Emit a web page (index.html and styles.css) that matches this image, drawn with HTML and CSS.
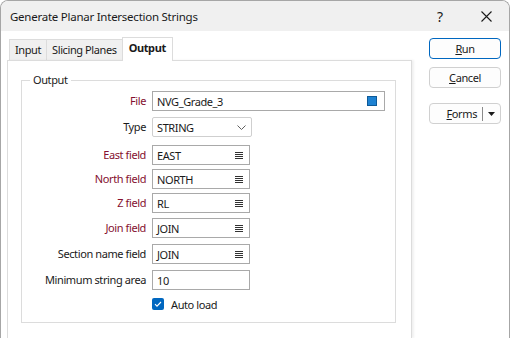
FILE: index.html
```html
<!DOCTYPE html>
<html>
<head>
  <title>Generate Planar Intersection Strings</title>
  <link rel="stylesheet" href="styles.css">
</head>
<body>
  <div class="dialog">
    <div class="titlebar">
      <span class="title">Generate Planar Intersection Strings</span>
      <span class="tb-btn help">?</span>
      <span class="tb-btn close">
        <svg width="11" height="11" viewBox="0 0 11 11"><path d="M0.5 0.5 L10.5 10.5 M10.5 0.5 L0.5 10.5" stroke="#1a1a1a" stroke-width="1.1"/></svg>
      </span>
    </div>

    <div class="body">
      <div class="main">
        <div class="tabs">
          <div class="tab">Input</div>
          <div class="tab">Slicing Planes</div>
          <div class="tab active">Output</div>
        </div>

        <div class="panel">
          <fieldset class="group">
            <legend>Output</legend>
            <div class="form">
              <label class="required">File</label>
              <div class="field wide">
                <span class="value">NVG_Grade_3</span>
                <span class="file-icon"></span>
              </div>

              <label>Type</label>
              <div class="field select">
                <span class="value">STRING</span>
                <svg class="chevron" width="9" height="5" viewBox="0 0 9 5"><path d="M0.5 0.5 L4.5 4.5 L8.5 0.5" fill="none" stroke="#606060" stroke-width="1"/></svg>
              </div>

              <label class="required">East field</label>
              <div class="field">
                <span class="value">EAST</span>
                <svg class="list-icon" width="8" height="7" viewBox="0 0 8 7"><path d="M0 0.5 H8 M0 2.5 H8 M0 4.5 H8 M0 6.5 H8" stroke="#333" stroke-width="1"/></svg>
              </div>

              <label class="required">North field</label>
              <div class="field">
                <span class="value">NORTH</span>
                <svg class="list-icon" width="8" height="7" viewBox="0 0 8 7"><path d="M0 0.5 H8 M0 2.5 H8 M0 4.5 H8 M0 6.5 H8" stroke="#333" stroke-width="1"/></svg>
              </div>

              <label class="required">Z field</label>
              <div class="field">
                <span class="value">RL</span>
                <svg class="list-icon" width="8" height="7" viewBox="0 0 8 7"><path d="M0 0.5 H8 M0 2.5 H8 M0 4.5 H8 M0 6.5 H8" stroke="#333" stroke-width="1"/></svg>
              </div>

              <label class="required">Join field</label>
              <div class="field">
                <span class="value">JOIN</span>
                <svg class="list-icon" width="8" height="7" viewBox="0 0 8 7"><path d="M0 0.5 H8 M0 2.5 H8 M0 4.5 H8 M0 6.5 H8" stroke="#333" stroke-width="1"/></svg>
              </div>

              <label>Section name field</label>
              <div class="field">
                <span class="value">JOIN</span>
                <svg class="list-icon" width="8" height="7" viewBox="0 0 8 7"><path d="M0 0.5 H8 M0 2.5 H8 M0 4.5 H8 M0 6.5 H8" stroke="#333" stroke-width="1"/></svg>
              </div>

              <label>Minimum string area</label>
              <div class="field">
                <span class="value">10</span>
              </div>

              <span></span>
              <div class="check-row">
                <span class="checkbox">
                  <svg width="12" height="12" viewBox="0 0 12 12"><path d="M3 6.2 L5 8.2 L9 4" fill="none" stroke="#fff" stroke-width="1.1"/></svg>
                </span>
                <span>Auto load</span>
              </div>
            </div>
          </fieldset>
        </div>
      </div>

      <div class="side">
        <button class="btn default"><u>R</u>un</button>
        <button class="btn"><u>C</u>ancel</button>
        <div class="btn split">
          <span class="split-label"><u>F</u>orms</span>
          <span class="split-sep"></span>
          <svg width="7" height="4" viewBox="0 0 7 4"><path d="M0 0 H7 L3.5 4 Z" fill="#1a1a1a"/></svg>
        </div>
      </div>
    </div>
  </div>
</body>
</html>
```

FILE: styles.css
```css
:root {
  --border-color: #dcdcdc;
  --field-border: #a9a9a9;
  --required-color: #85102f;
  --accent-color: #0067c0;
  --text-color: #1a1a1a;
}

* {
  box-sizing: border-box;
}

body {
  margin: 0;
  width: 510px;
  height: 338px;
  overflow: hidden;
  font-family: "Noto Sans", "Open Sans", sans-serif;
  font-size: 11px;
  letter-spacing: -0.4px;
  color: var(--text-color);
  background: #fff;
}

.dialog {
  height: 338px;
  border: 1px solid #a6a6a6;
  border-bottom: none;
  border-radius: 8px 8px 0 0;
  overflow: hidden;
  display: flex;
  flex-direction: column;
}

/* title bar */
.titlebar {
  height: 30px;
  background: #f0f0f0;
  display: flex;
  align-items: center;
  padding-left: 9px;
  font-size: 11.5px;
  letter-spacing: -0.25px;
}

.title {
  flex: 1;
}

.tb-btn {
  display: flex;
  align-items: center;
  justify-content: center;
}

.help {
  width: 46px;
  font-size: 14px;
}

.close {
  width: 46px;
}

/* main area */
.body {
  flex: 1;
  display: flex;
  min-height: 0;
}

.main {
  width: 414px;
  padding: 6px 0 0 6px;
  display: flex;
  flex-direction: column;
}

.tabs {
  display: flex;
  align-items: flex-end;
  padding-left: 2px;
  height: 23px;
}

.tab {
  height: 21px;
  padding: 0 5px;
  line-height: 20px;
  background: #f0f0f0;
  border: 1px solid var(--border-color);
  border-bottom: none;
  margin-right: -1px;
}

.tab.active {
  background: #fff;
  font-weight: bold;
  position: relative;
  z-index: 1;
  margin-bottom: -1px;
  height: 24px;
  padding: 0 6px;
}

.panel {
  flex: 1;
  width: 405px;
  background: #fff;
  border: 1px solid var(--border-color);
  border-bottom: none;
  box-shadow: 2px 0 2px rgba(0, 0, 0, 0.06);
  padding: 11px 16px 0 13px;
}

.group {
  margin: 0;
  border: 1px solid var(--border-color);
  padding: 3px 10px 12px 10px;
}

.group legend {
  padding: 0 3px;
  margin-left: -2px;
  line-height: 16px;
}

/* form grid */
.form {
  display: grid;
  grid-template-columns: 114px auto;
  grid-template-rows: 26px 28px 24px 24px 25px 26px 26px 28px 12px;
  column-gap: 6px;
  align-items: start;
}

.form label {
  text-align: right;
  line-height: 20px;
  white-space: nowrap;
}

.form label.required {
  color: var(--required-color);
}

.field {
  width: 98px;
  height: 20px;
  border: 1px solid var(--field-border);
  display: flex;
  align-items: center;
  padding: 0 6px 0 4px;
  background: #fff;
}

.field .value {
  flex: 1;
}

.field.wide {
  width: 233px;
}

.field.select {
  width: 100px;
  border-color: #cfcfcf;
  border-radius: 2px;
  padding-right: 5px;
}

.file-icon {
  width: 10px;
  height: 10px;
  background: #1e82d2;
  border: 1px solid #0e5a98;
  margin-right: 1px;
}

.check-row {
  display: flex;
  align-items: center;
  gap: 7px;
  height: 12px;
}

.checkbox {
  width: 12px;
  height: 12px;
  border-radius: 2px;
  background: var(--accent-color);
  display: flex;
}

/* right buttons */
.side {
  padding: 7px 0 0 14px;
  display: flex;
  flex-direction: column;
  gap: 8px;
}

.btn {
  width: 72px;
  height: 21px;
  font-family: inherit;
  font-size: 11px;
  letter-spacing: inherit;
  color: var(--text-color);
  background: #fdfdfd;
  border: 1px solid #d0d0d0;
  border-radius: 4px;
  padding: 0;
}

.btn.default {
  border-color: var(--accent-color);
}

.btn.split {
  margin-top: 7px;
  display: flex;
  align-items: center;
  justify-content: flex-end;
  padding-right: 5px;
}

.split-sep {
  width: 1px;
  height: 14px;
  background: #8a8a8a;
  margin: 0 5px 0 5px;
}
```
